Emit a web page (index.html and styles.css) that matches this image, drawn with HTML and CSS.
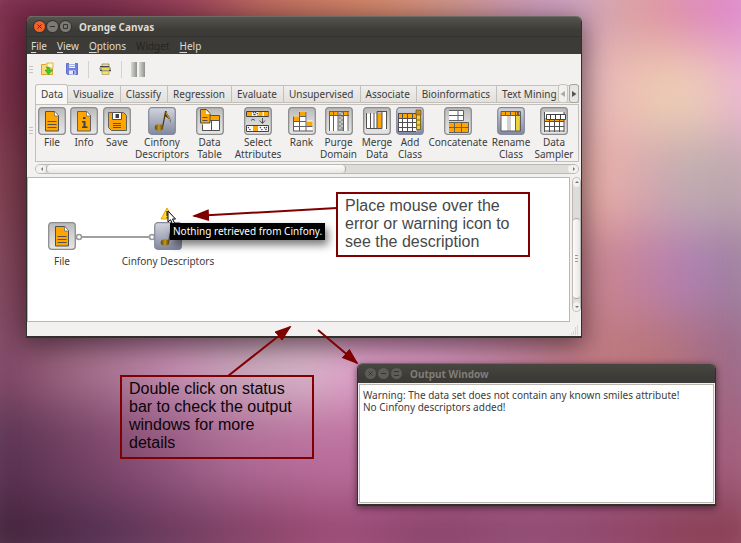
FILE: index.html
```html
<!DOCTYPE html>
<html lang="en">
<head>
<meta charset="utf-8">
<title>Orange Canvas</title>
<link rel="stylesheet" href="styles.css">
</head>
<body>
<svg class="defs" aria-hidden="true">
  <defs>
    <linearGradient id="gray" x1="0" y1="0" x2="0" y2="1"><stop offset="0" stop-color="#b9b9b9"/><stop offset=".45" stop-color="#d2d2d2"/><stop offset="1" stop-color="#e6e6e6"/></linearGradient>
    <linearGradient id="blue" x1="0" y1="0" x2="0" y2="1"><stop offset="0" stop-color="#d3d5dc"/><stop offset="1" stop-color="#8288a0"/></linearGradient>
    <linearGradient id="note" x1="0" y1="0" x2="1" y2="0"><stop offset="0" stop-color="#5c4300"/><stop offset=".5" stop-color="#c49a22"/><stop offset="1" stop-color="#5c4300"/></linearGradient>
    <marker id="head" viewBox="0 0 17 12" refX="15" refY="6" markerWidth="17" markerHeight="12" markerUnits="userSpaceOnUse" orient="auto"><path d="M0 0L17 6L0 12z" fill="#800000"/></marker>
  </defs>
  <symbol id="base-gray" viewBox="0 0 28 28"><rect x=".7" y=".7" width="26.6" height="26.6" rx="3" fill="url(#gray)" stroke="#8d8d8d" stroke-width="1.3"/></symbol>
  <symbol id="base-blue" viewBox="0 0 28 28"><rect x=".7" y=".7" width="26.6" height="26.6" rx="3" fill="url(#blue)" stroke="#84889a" stroke-width="1.2"/></symbol>
  <symbol id="i-file" viewBox="0 0 28 28"><use href="#base-gray"/><path d="M7.5 4.500h9l4 4.500v15h-13z" fill="#ffa500" stroke="#505050"/><path d="M16.500 4v5h4.500z" fill="#fff" stroke="#606060" stroke-width=".7"/><path d="M9.500 14.500h9M9.500 17.500h9M9.500 20.500h9" stroke="#505050" fill="none"/></symbol>
  <symbol id="i-info" viewBox="0 0 28 28"><use href="#base-gray"/><path d="M7.500 4.500h9l4 4.500v15h-13z" fill="#ffa500" stroke="#606060"/><path d="M16.500 4v5h4.500z" fill="#fff" stroke="#606060" stroke-width=".7"/><path d="M13 10h2.500v2h-2.500zM12 14h3.500v5.500h2v1.500h-5.500v-1.500h1.500v-4h-1.500z" fill="#404040"/></symbol>
  <symbol id="i-save" viewBox="0 0 28 28"><use href="#base-gray"/><path d="M5.500 5.500h15l3 3v15h-15l-3-3z" fill="#ffa500" stroke="#606060"/><path d="M9.500 5.500h9v7h-9z" fill="#fff" stroke="#505050"/><path d="M12.500 7h3.500v4h-3.500z" fill="#404040"/><path d="M10 16.500h8M10 18.500h8M10 20.500h8" stroke="#505050" fill="none"/></symbol>
  <symbol id="i-note" viewBox="0 0 28 28"><use href="#base-blue"/><path d="M14.200 19L17 4h1.500c.5 5 5 5.500 3.800 12-.5-4-2.500-5.500-5-6.500l-2 10z" fill="#4a3912"/><path d="M18 5.500c1 4 4 5 3.500 8" fill="none" stroke="#e0b020" stroke-width="1"/><ellipse cx="11" cy="20.500" rx="4.200" ry="3.300" fill="url(#note)"/></symbol>
  <symbol id="i-table" viewBox="0 0 28 28"><use href="#base-gray"/><path d="M9.500 8.500h14v15h-17v-6" fill="#fff" stroke="#505050"/><path d="M11 9h12v4h-12z" fill="#ffa500"/><path d="M10 13.500h13.500M15.500 13.500v10M6.500 18v5.500" stroke="#505050" fill="none"/><path d="M4.500 2.500h6l3.500 4v9.500h-9.500z" fill="#ffa500" stroke="#505050"/><path d="M10 3v4h4z" fill="#fff"/><path d="M6.500 10.500h5M6.500 13.500h5" stroke="#505050"/></symbol>
  <symbol id="i-select" viewBox="0 0 28 28"><use href="#base-gray"/><path d="M2.500 4.500h22v5h-22zM2.500 18.500h22v6h-22z" fill="#fff" stroke="#404040"/><path d="M3 5h5v4h-5zM14.500 5h4v4h-4zM20 5h4.500v4h-4.500zM9 19h5v5h-5z" fill="#ffa500"/><path d="M9 5l3 4M12 5l-3 4M13 6l1 3M4 20l3 4M16 20l3 4M20 20l3 4M23 20l-2 2" stroke="#404040" stroke-width="1.200" stroke-dasharray="1.500 1"/><path d="M7 13.500l2-1.500 2 1.500M18.500 11v5M15.500 13.500l3 3 2.500-3" fill="none" stroke="#505050"/></symbol>
  <symbol id="i-rank" viewBox="0 0 28 28"><use href="#base-gray"/><path d="M5.500 9.500h6v-5h7v9h6v10h-19z" fill="#fff"/><path d="M12 4.500h6v4.500h-6zM5.500 9.500h6v4.500h-6zM18.500 14.500h6v4.500h-6z" fill="#ffa500"/><path d="M5.500 9.500v14.500M11.500 5v19M18 5v19M5 14.500h13M5 19.500h19.500M5 24h20M12 9.500h6" stroke="#606060" fill="none"/></symbol>
  <symbol id="i-purge" viewBox="0 0 28 28"><use href="#base-gray"/><path d="M4 4.500h19.500v19.500h-19.500z" fill="#fff"/><path d="M4 4.500h9v4h-9zM19 4.500h4.500v4h-4.500z" fill="#ffa500"/><path d="M13.500 4h5v20h-5z" fill="#999"/><path d="M14 5h2M16 7h2M14 9h2M16 11h2M14 13h2M16 15h2M14 17h2M16 19h2M14 21h2" stroke="#eee"/><path d="M4 4.500h20M4 8.500h20M4.500 4v20M8.500 4v20M13 4v20M18.500 4v20M23 4v20" stroke="#606060" fill="none"/></symbol>
  <symbol id="i-merge" viewBox="0 0 28 28"><use href="#base-gray"/><path d="M3.500 6.500h10v15h-10zM19 4.500h5v18h-5z" fill="#fff"/><path d="M14 6h5v16h-5z" fill="#ffa500"/><path d="M3.500 6v15.500h15.500v-17h-5v17M7.500 6v15M11 6v15M19 4.500h5M23.500 5v17" fill="none" stroke="#505050"/></symbol>
  <symbol id="i-add" viewBox="0 0 28 28"><use href="#base-blue"/><path d="M2.500 6.500h18v18h-18z" fill="#fff"/><path d="M2.500 6.500h18v5h-18z" fill="#ffa500"/><path d="M2.500 6v19M6.500 6v19M11.500 6v19M16.500 6v19M2 6.500h18M2 11.500h18M2 15.500h18M2 20.500h18M2 24.500h18" stroke="#505050" fill="none"/><path d="M20.500 3.500h4v19h-4z" fill="#ecd33e" stroke="#806b20"/><path d="M20 3h5v5h-5z" fill="#c88b20" stroke="#66521c" stroke-width=".7"/><path d="M20.500 13h4M20.500 18h4" stroke="#806b20"/></symbol>
  <symbol id="i-concat" viewBox="0 0 28 28"><use href="#base-gray"/><path d="M5 3.500h14v10h-14z" fill="#fff"/><path d="M5 15.500h19v10h-19z" fill="#ffa500"/><path d="M5 3.500h14.500v10h-14.500M5 8.500h14M14 3.500v10M5 15.500h19.500v10h-19.500M5 20.500h19M10.500 15.500v10M17.500 15.500v10" stroke="#606060" fill="none"/></symbol>
  <symbol id="i-rename" viewBox="0 0 28 28"><use href="#base-blue"/><path d="M4 4.500h15v19.500h-15z" fill="#fff"/><path d="M10 9h4v15h-4z" fill="#d0d0d0"/><path d="M4 4.500h19v4h-19z" fill="#ffa500"/><path d="M18.500 9h4v15h-4z" fill="#ecd33e"/><path d="M4 4.500h19.500v19.500h-19.500zM4 8.500h19M8.500 4v5M13.500 4v5M18.500 4v20" stroke="#606060" fill="none"/><path d="M20 5l2 3M22 5l-2 3" stroke="#505050"/></symbol>
  <symbol id="i-sampler" viewBox="0 0 28 28"><use href="#base-gray"/><path d="M4 5h20v19.500h-20z" fill="#fff"/><path d="M4 11h20v3.500h-20z" fill="#ffa500"/><path d="M4.500 5v20M9.500 12v13M14.500 12v13M19.500 12v13M24 5v20M4 14.500h20M4 19.500h20M4 24h20" stroke="#505050" fill="none"/><path d="M6.500 7.500h19v5h-19z" fill="#fff" stroke="#404040"/><path d="M10.500 7.500v5M15.500 7.500v5M20.500 7.500v5" stroke="#404040"/></symbol>
</svg>

<main class="desktop">
  <section class="window main-window" aria-label="Orange Canvas">
    <header class="titlebar">
      <button class="dot close" aria-label="Close"><svg viewBox="0 0 11 11"><path d="M3.500 3.500l4 4M7.500 3.500l-4 4"/></svg></button>
      <button class="dot" aria-label="Minimize"><svg viewBox="0 0 11 11"><path d="M3 5.500h5"/></svg></button>
      <button class="dot" aria-label="Maximize"><svg viewBox="0 0 11 11"><path d="M3.500 3.500h4v4h-4z"/></svg></button>
      <h1>Orange Canvas</h1>
    </header>
    <nav class="menubar">
      <button><u>F</u>ile</button><button><u>V</u>iew</button><button><u>O</u>ptions</button><button disabled>Widget</button><button><u>H</u>elp</button>
    </nav>
    <div class="toolbar">
      <span class="grip"></span>
      <button aria-label="Open"><svg viewBox="0 0 14 14"><path d="M1.500 2.500h4l1-1h6v11h-11z" fill="#f7dc79" stroke="#dda32a"/><path d="M7 1h6v5h-6z" fill="#fff5c8" stroke="#e8b44a"/><path d="M6 5.500c3-1 4 0 4 2.500h2.500l-4 4.500-3.500-4.500h2.500c0-1 0-2-1.500-2.500z" fill="#44c832" stroke="#2a9a22" stroke-width=".6"/></svg></button>
      <button aria-label="Save"><svg viewBox="0 0 14 14"><path d="M1.500 1.500h11v11h-10l-1-1z" fill="#7481db" stroke="#6370cc"/><path d="M4 1h6v5h-6z" fill="#edf0ff"/><path d="M4 2.500h6M4 4.500h6" stroke="#a9b2e6"/><path d="M4 8.500h6.500v4h-6.500z" fill="#e9ebfa"/><path d="M8 9h1.500v3H8z" fill="#5460b4"/></svg></button>
      <span class="rule"></span>
      <button aria-label="Print"><svg viewBox="0 0 14 14"><path d="M4 2h7v3h-7z" fill="#eee39a" stroke="#666" stroke-width=".6"/><path d="M2.500 4.500h9.500l1 2v3h-10l-2-3z" fill="#a2a59a"/><path d="M2 4.500h9" stroke="#444"/><path d="M4 6h7v2h-7z" fill="#eed94c"/><path d="M4 9h7v3.500h-7z" fill="#f3e468" stroke="#998f5a" stroke-width=".6"/><path d="M2 8.500h2M11 8.500h2" stroke="#444"/></svg></button>
      <span class="rule"></span>
      <button class="pause" aria-label="Pause"><i></i><i></i></button>
    </div>
    <div class="palette">
      <span class="grip"></span>
      <div class="palette-body">
        <div class="tabs" role="tablist">
          <button class="tab active" role="tab">Data</button><button class="tab" role="tab">Visualize</button><button class="tab" role="tab">Classify</button><button class="tab" role="tab">Regression</button><button class="tab" role="tab">Evaluate</button><button class="tab" role="tab">Unsupervised</button><button class="tab" role="tab">Associate</button><button class="tab" role="tab">Bioinformatics</button><button class="tab" role="tab">Text Mining</button><button class="tab last" role="tab">Prototypes</button>
          <div class="tab-scroll"><button disabled aria-label="Previous tabs"><svg viewBox="0 0 8 8"><path d="M6 1v6L1.500 4z"/></svg></button><button aria-label="More tabs"><svg viewBox="0 0 8 8"><path d="M2 1v6L6.500 4z"/></svg></button></div>
        </div>
        <div class="widgets">
          <button><svg><use href="#i-file"/></svg>File</button>
          <button><svg><use href="#i-info"/></svg>Info</button>
          <button><svg><use href="#i-save"/></svg>Save</button>
          <button><svg><use href="#i-note"/></svg><span>Cinfony</span><span>Descriptors</span></button>
          <button><svg><use href="#i-table"/></svg><span>Data</span><span>Table</span></button>
          <button><svg><use href="#i-select"/></svg><span>Select</span><span>Attributes</span></button>
          <button><svg><use href="#i-rank"/></svg>Rank</button>
          <button><svg><use href="#i-purge"/></svg><span>Purge</span><span>Domain</span></button>
          <button><svg><use href="#i-merge"/></svg><span>Merge</span><span>Data</span></button>
          <button><svg><use href="#i-add"/></svg><span>Add</span><span>Class</span></button>
          <button><svg><use href="#i-concat"/></svg>Concatenate</button>
          <button><svg><use href="#i-rename"/></svg><span>Rename</span><span>Class</span></button>
          <button><svg><use href="#i-sampler"/></svg><span>Data</span><span>Sampler</span></button>
        </div>
        <div class="hscroll"><span class="cap left"></span><span class="thumb"></span><span class="track"></span><span class="cap right"></span></div>
      </div>
    </div>
    <div class="workspace">
      <div class="canvas">
        <svg class="link" viewBox="0 0 82 8"><path d="M5 4h72" stroke="#a0a0a0" stroke-width="2"/><circle cx="4" cy="4" r="2.500"/><circle cx="77" cy="4" r="2.500"/></svg>
        <div class="node node-file"><svg><use href="#i-file"/></svg>File</div>
        <div class="node node-cinfony"><svg><use href="#i-note"/></svg>Cinfony Descriptors</div>
        <svg class="warning" viewBox="0 0 14 13"><path d="M7 1L13 12H1z" fill="#ffd82c" stroke="#dfa51a" stroke-linejoin="round"/><path d="M7 4v5M7 10v1" stroke="#584000" stroke-width="1.300"/></svg>
        <div class="tooltip" role="tooltip">Nothing retrieved from Cinfony.</div>
        <svg class="pointer" viewBox="0 0 10 15"><path d="M1 1v11l2.500-2.300 2 4.300 2-1-2-4h3z" fill="#fff" stroke="#000"/></svg>
      </div>
      <div class="vscroll"><span class="cap"></span><span class="track"></span><span class="thumb"></span><span class="track end"></span><span class="cap down"></span></div>
    </div>
    <footer class="statusbar"><svg viewBox="0 0 10 10"><path d="M7 1h2M5 3h4M5 5h4M3 7h6M1 9h8"/></svg></footer>
  </section>

  <section class="window output-window" aria-label="Output Window">
    <header class="titlebar inactive">
      <button class="dot" aria-label="Close"><svg viewBox="0 0 11 11"><path d="M3.500 3.500l4 4M7.500 3.500l-4 4"/></svg></button>
      <button class="dot" aria-label="Minimize"><svg viewBox="0 0 11 11"><path d="M3 5.500h5"/></svg></button>
      <button class="dot" aria-label="Maximize"><svg viewBox="0 0 11 11"><path d="M3 3.500h5M3 7.500h5"/></svg></button>
      <h2>Output Window</h2>
    </header>
    <textarea class="log" readonly aria-label="Output">Warning: The data set does not contain any known smiles attribute!
No Cinfony descriptors added!</textarea>
  </section>

  <p class="callout callout-warning">Place mouse over the error or warning icon to see the description</p>
  <p class="callout callout-status">Double click on status bar to check the output windows for more details</p>
  <svg class="arrows" width="741" height="543" viewBox="0 0 741 543" aria-hidden="true"><path d="M337 208L194 216"/><path d="M228 376L290 327"/><path d="M318 330L357 363"/></svg>
</main>
</body>
</html>
```
FILE: styles.css
```css
* { box-sizing: border-box; }
body { margin: 0; font: 10px/12px "Noto Sans", sans-serif; color: #3c3c3c; }
button { margin: 0; padding: 0; border: 0; background: none; color: inherit; font: inherit; }
h1, h2, p { margin: 0; }
svg { display: block; flex: none; }
.defs { position: absolute; width: 0; height: 0; }

.desktop { position: relative; z-index: 0; min-height: 100vh; overflow: hidden; }

/* Wallpaper: seven colour bands, stacked and blurred into one another */
.desktop::before {
  content: "";
  position: absolute;
  inset: -45px;
  z-index: -1;
  filter: blur(26px);
  background:
    linear-gradient(90deg, #7d2d4b 5%, #752848 17%, #9a4058 29%, #bd6a5c 37%, #d38464 50%, #cf9488 60%, #c796b8 69%, #cda4c4 75%, #dda098 82%, #df86b4 89%, #de8cd2 95%) 0 0,
    linear-gradient(90deg, #742a43 5%, #8a4050 30%, #c08070 55%, #c8a0b0 70%, #ecbab8 79%, #eeceb0 85%, #eeceb8 90%, #eab0d4 95%) 0 16.67%,
    linear-gradient(90deg, #7a3a4c 5%, #905060 40%, #c8968c 70%, #eeb2ac 78%, #caa4b0 85%, #bcb2b0 89%, #c0a2ae 95%) 0 33.33%,
    linear-gradient(90deg, #7d4256 5%, #a06078 40%, #c08890 70%, #ca868e 78%, #c080a6 84%, #ac80b8 89%, #9c8098 95%) 0 50%,
    linear-gradient(90deg, #7a4060 5%, #9a6680 13%, #c690b4 27%, #ccb0c0 37%, #dabacc 43%, #dfa0ca 48%, #d094bc 60%, #c48098 70%, #c07a80 76%, #b87478 85%, #98688c 95%) 0 66.67%,
    linear-gradient(90deg, #573050 5%, #6b3c5c 12%, #8c5078 23%, #ac6c94 33%, #bd709e 45%, #b06890 65%, #a86888 87%, #a05c78 95%) 0 83.33%,
    linear-gradient(90deg, #42213a 5%, #533050 17%, #743c60 29%, #95466e 42%, #9c4c78 47%, #884068 57%, #904c74 68%, #90446a 80%, #8a3e54 88%, #8a4056 95%) 0 100%;
  background-size: 100% 14.4%;
  background-repeat: no-repeat;
}

.window { position: absolute; display: flex; flex-direction: column; border: solid #30302c; border-width: 0 1px 2px; border-radius: 6px 6px 0 0; background: #f2f1f0; }
.main-window { top: 16px; left: 26px; right: 159px; box-shadow: 0 6px 26px 2px #1c0c1490; }
.output-window { top: 363px; left: 357px; right: 25px; box-shadow: 0 2px 7px #200c18a0; }

.titlebar { display: flex; align-items: center; gap: 2px; height: 20px; padding: 0 7px; border-top: 1px solid #6b6a64; border-radius: 5px 5px 0 0; background: linear-gradient(#55544e, #3c3b37 70%); color: #dfdbd2; }
.titlebar h1, .titlebar h2 { margin-left: 6px; font: bold 10px/14px "Noto Sans", sans-serif; }
.inactive { color: #807d78; background: linear-gradient(#474640, #3c3b37 70%); }
.dot { width: 11px; height: 11px; border-radius: 50%; background: #7c7a73; box-shadow: 0 0 0 1px #33322e; }
.dot svg { width: 11px; height: 11px; fill: none; stroke: #35342f; }
.close { background: #f0622c; }
.inactive .dot { background: #5d5c56; box-shadow: none; }

.menubar { display: flex; align-items: center; gap: 10px; height: 18px; padding: 0 4px; border-top: 1px solid #33322e; background: #3c3b37; color: #dfdbd2; }
.menubar u { text-underline-offset: 2px; }
.menubar button:disabled { color: #262522; }

.toolbar { display: flex; align-items: center; height: 30px; padding-left: 2px; }
.toolbar svg { width: 14px; height: 14px; }
.toolbar button { margin: 0 0 0 11px; }
.toolbar .grip + button { margin-left: 7px; }
.grip { flex: none; width: 4px; height: 7px; background: repeating-linear-gradient(#c6c4c0 0 1px, #f2f1f0 1px 3px); }
.rule { width: 1px; height: 17px; margin-left: 9px; background: #d5d2ce; }
.toolbar .rule + button { margin-left: 9px; }
.pause { display: flex; gap: 2px; }
.pause i { width: 6px; height: 15px; background: linear-gradient(90deg, #d8dad5, #8f928b); }

.palette { display: flex; align-items: center; gap: 2px; padding: 0 2px; }
.palette-body { flex: 1; min-width: 0; }
.tabs { position: relative; z-index: 1; display: flex; align-items: flex-end; height: 20px; overflow: hidden; }
.tab { flex: none; height: 18px; margin-bottom: 1px; padding: 0 6px 0 5px; border: solid #c3c0bc; border-width: 1px 1px 1px 0; background: linear-gradient(#f0efed, #e2e0dd); }
.active { height: 20px; margin: 0; padding: 0 4px 1px 5px; border-width: 1px 1px 0; border-radius: 3px 3px 0 0; background: #f8f7f6; }
.last { flex: 0 1 auto; min-width: 0; overflow: hidden; }
.tab-scroll { position: absolute; top: 0; right: 0; display: flex; gap: 1px; height: 19px; }
.tab-scroll button { width: 10px; border: 1px solid #a8a5a0; border-radius: 3px; background: #e8e6e3; }
.tab-scroll button:disabled { border-color: #c8c5c0; background: #f2f1f0e0; }
.tab-scroll svg { width: 8px; height: 8px; fill: #555; }
.tab-scroll button:disabled svg { fill: #aaa; }
.widgets { display: grid; grid-template-columns: 32px 32px 34px 56px 39px 58px 29px 45px 32px 34px 62px 44px 42px; align-items: start; justify-content: start; padding: 2px 0 1px; border: 1px solid #c3c0bc; overflow: hidden; }
.widgets button { display: flex; flex-direction: column; align-items: center; white-space: nowrap; }
.widgets svg { width: 28px; height: 28px; margin-bottom: 1px; }

.hscroll { display: flex; height: 10px; margin: 2px 0 3px; border: 1px solid #bdbab5; border-radius: 5px; background: #dedcd9; }
.cap { position: relative; flex: none; background: #f2f1f0; }
.hscroll .cap { width: 10px; border-radius: 4px; }
.cap::after { content: ""; position: absolute; top: 2px; left: 3px; border: 2px solid transparent; border-right-color: #777; }
.right::after { border-right-color: transparent; border-left-color: #777; left: 5px; }
.hscroll .thumb { flex: 300; border: solid #aaa7a2; border-width: 0 1px; border-radius: 4px; background: linear-gradient(#fcfcfb, #e9e7e5); }
.hscroll .track { flex: 223; }

.workspace { display: flex; gap: 2px; min-height: 145px; }
.canvas { position: relative; flex: 1; border: 1px solid #bab6b0; background: #fff; }
.node { position: absolute; display: flex; flex-direction: column; align-items: center; gap: 5px; width: 94px; }
.node svg { width: 28px; height: 28px; }
.node-file { top: 44px; left: -13px; }
.node-cinfony { top: 44px; left: 93px; }
.link { position: absolute; top: 55px; left: 47px; width: 82px; height: 8px; fill: #fff; stroke: #999; stroke-width: 1.500; }
.warning { position: absolute; top: 29px; left: 132px; width: 14px; height: 13px; }
.pointer { position: absolute; top: 32px; left: 139px; width: 10px; height: 15px; }
.tooltip { position: absolute; top: 45px; left: 142px; padding: 2px 3px 3px; background: #000; color: #fff; white-space: nowrap; box-shadow: 3px 5px 9px #0008; }
.vscroll { display: flex; flex-direction: column; width: 9px; margin-bottom: 10px; border: 1px solid #bdbab5; border-radius: 5px; background: #dedcd9; }
.vscroll .cap { height: 9px; border-radius: 4px; }
.vscroll .cap::after { left: 2px; border-color: transparent transparent #777; top: 1px; }
.vscroll .down::after { border-color: #777 transparent transparent; top: 4px; }
.vscroll .track { flex: 32; }
.vscroll .end { flex: 3; }
.vscroll .thumb { flex: 80; border: solid #aaa7a2; border-width: 1px 0; border-radius: 4px; background: repeating-linear-gradient(#999 0 1px, transparent 1px 3px) center / 3px 7px no-repeat, linear-gradient(90deg, #fcfcfb, #e9e7e5); }
.statusbar { display: flex; align-items: flex-end; justify-content: flex-end; height: 14px; padding: 1px; }
.statusbar svg { width: 10px; height: 10px; stroke: #bbb; stroke-dasharray: 1 1; }

.log { display: block; width: auto; height: 119px; margin: 1px; padding: 4px 3px; border: 1px solid #bab6b0; outline: 0; resize: none; background: #fff; color: #3c3c3c; font: 10px/12px "Noto Sans", sans-serif; }

.callout { position: absolute; width: 194px; padding: 3px 14px 3px 7px; border: 2px solid #800000; font: 16px/18px "Liberation Sans", sans-serif; }
.callout-warning { top: 192px; left: 336px; padding-bottom: 4px; background: #fff; color: #484848; }
.callout-status { top: 375px; left: 120px; padding-bottom: 5px; color: #0a0408; }
.arrows { position: absolute; top: 0; left: 0; pointer-events: none; fill: none; stroke: #800000; stroke-width: 2; }
.arrows path { marker-end: url(#head); }
```
